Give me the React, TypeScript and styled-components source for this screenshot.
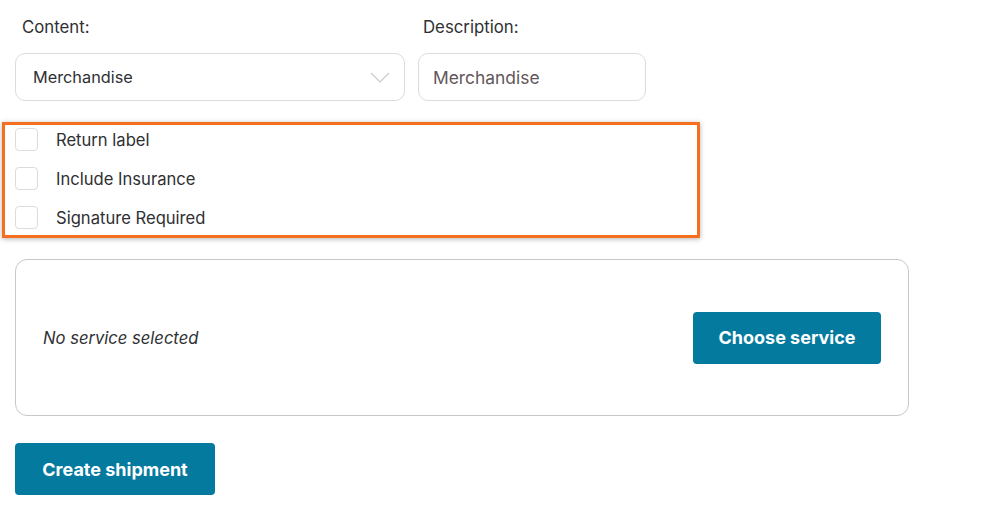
import React from 'react';
import styled, { createGlobalStyle } from 'styled-components';

const GlobalStyle = createGlobalStyle`
  body {
    margin: 0;
    background: #ffffff;
    font-family: Inter, "Noto Sans", sans-serif;
    color: #2f3033;
  }
`;

const Page = styled.div`
  width: 995px;
  height: 518px;
  padding: 17px 0 0 15px;
  box-sizing: border-box;
`;

const FieldRow = styled.div`
  display: flex;
  gap: 13px;
`;

const Field = styled.div<{ $width: number }>`
  width: ${(p) => p.$width}px;
  display: flex;
  flex-direction: column;
`;

const Label = styled.label<{ $indent: number }>`
  font-size: 16.8px;
  line-height: 20px;
  padding-left: ${(p) => p.$indent}px;
  margin-bottom: 16px;
  color: #2f3033;
`;

const SelectBox = styled.div`
  height: 48px;
  box-sizing: border-box;
  border: 1px solid #dcdcdc;
  border-radius: 10px;
  display: flex;
  align-items: center;
  justify-content: space-between;
  padding: 0 14px 0 17px;
  font-size: 16.3px;
  color: #2f3033;
`;

const TextInput = styled.div`
  height: 48px;
  box-sizing: border-box;
  border: 1px solid #dcdcdc;
  border-radius: 10px;
  display: flex;
  align-items: center;
  padding: 0 14px;
  font-size: 17.4px;
  color: #62575b;
`;

const Options = styled.div`
  position: relative;
  margin-top: 27px;
  display: flex;
  flex-direction: column;
  gap: 16px;

  &::before {
    content: '';
    position: absolute;
    top: -6px;
    left: -13px;
    width: 698px;
    height: 116px;
    box-sizing: border-box;
    border: 3px solid #f4701f;
    box-shadow: 0 1px 5px rgba(0, 0, 0, 0.3);
    pointer-events: none;
  }
`;

const OptionRow = styled.label`
  display: flex;
  align-items: center;
  height: 23px;
  gap: 18px;
  font-size: 16.6px;
  color: #2f3033;
`;

const Check = styled.span`
  width: 23px;
  height: 23px;
  box-sizing: border-box;
  border: 1px solid #dcdcdc;
  border-radius: 4px;
  background: #fff;
`;

const ServiceCard = styled.div`
  margin-top: 30px;
  width: 894px;
  height: 157px;
  box-sizing: border-box;
  border: 1px solid #c8c8c8;
  border-radius: 12px;
  display: flex;
  align-items: center;
  justify-content: space-between;
  padding: 0 27px;
`;

const EmptyText = styled.span`
  font-style: italic;
  font-size: 16.6px;
  color: #2f3033;
`;

const PrimaryButton = styled.button<{ $width: number }>`
  width: ${(p) => p.$width}px;
  height: 52px;
  border: none;
  border-radius: 4px;
  background: #047a9e;
  color: #ffffff;
  font-family: Inter, "Noto Sans", sans-serif;
  font-size: 18px;
  font-weight: 700;
  cursor: pointer;
`;

const Footer = styled.div`
  margin-top: 27px;
`;

function Chevron() {
  return (
    <svg width="20" height="11" viewBox="0 0 20 11" fill="none">
      <path d="M1 1l9 9 9-9" stroke="#c9c9c9" strokeWidth="1.2" />
    </svg>
  );
}

const OPTIONS = ['Return label', 'Include Insurance', 'Signature Required'];

export default function App() {
  return (
    <Page>
      <GlobalStyle />
      <FieldRow>
        <Field $width={390}>
          <Label $indent={7}>Content:</Label>
          <SelectBox>
            Merchandise
            <Chevron />
          </SelectBox>
        </Field>
        <Field $width={228}>
          <Label $indent={5}>Description:</Label>
          <TextInput>Merchandise</TextInput>
        </Field>
      </FieldRow>
      <Options>
        {OPTIONS.map((o) => (
          <OptionRow key={o}>
            <Check />
            {o}
          </OptionRow>
        ))}
      </Options>
      <ServiceCard>
        <EmptyText>No service selected</EmptyText>
        <PrimaryButton $width={188}>Choose service</PrimaryButton>
      </ServiceCard>
      <Footer>
        <PrimaryButton $width={200}>Create shipment</PrimaryButton>
      </Footer>
    </Page>
  );
}
